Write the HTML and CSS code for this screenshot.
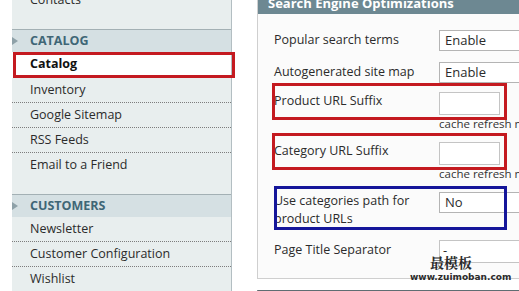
FILE: index.html
```html
<!DOCTYPE html>
<html lang="en">
<head>
    <meta charset="UTF-8">
    <title>Configuration - Catalog</title>
    <link rel="stylesheet" href="styles.css">
</head>
<body>
    <!-- Left configuration menu -->
    <div class="sidebar">
        <ul class="menu-section first">
            <li class="menu-item last">Contacts</li>
        </ul>

        <div class="menu-title">CATALOG</div>
        <ul class="menu-section">
            <li class="menu-item active">Catalog</li>
            <li class="menu-item">Inventory</li>
            <li class="menu-item">Google Sitemap</li>
            <li class="menu-item">RSS Feeds</li>
            <li class="menu-item last">Email to a Friend</li>
        </ul>

        <div class="menu-title">CUSTOMERS</div>
        <ul class="menu-section">
            <li class="menu-item">Newsletter</li>
            <li class="menu-item">Customer Configuration</li>
            <li class="menu-item last">Wishlist</li>
        </ul>
    </div>

    <!-- Settings panel -->
    <div class="content">
        <div class="fieldset">
            <div class="fieldset-title">Search Engine Optimizations</div>
            <div class="fieldset-body">
                <div class="row row-first">
                    <div class="field">
                        <div class="label">Popular search terms</div>
                        <div class="control select">Enable</div>
                    </div>
                </div>
                <div class="row row-second">
                    <div class="field">
                        <div class="label">Autogenerated site map</div>
                        <div class="control select">Enable</div>
                    </div>
                </div>
                <div class="row row-input">
                    <div class="field hl hl-red">
                        <div class="label">Product URL Suffix</div>
                        <div class="control text-input"></div>
                    </div>
                    <div class="note">cache refresh needed</div>
                </div>
                <div class="row row-input">
                    <div class="field hl hl-red">
                        <div class="label">Category URL Suffix</div>
                        <div class="control text-input"></div>
                    </div>
                    <div class="note">cache refresh needed</div>
                </div>
                <div class="row row-select">
                    <div class="field hl hl-blue">
                        <div class="label">Use categories path for product URLs</div>
                        <div class="control select">No</div>
                    </div>
                </div>
                <div class="row row-last">
                    <div class="field">
                        <div class="label">Page Title Separator</div>
                        <div class="control text-input">-</div>
                    </div>
                </div>
            </div>
        </div>
        <div class="fieldset next"></div>

        <!-- Watermark -->
        <div class="watermark">
            <div class="wm-cn">最模板</div>
            <div class="wm-url">www.zuimoban.com</div>
        </div>
    </div>
</body>
</html>
```

FILE: styles.css
```css
/* Reset */
* {
    box-sizing: border-box;
    margin: 0;
    padding: 0;
}

body {
    font-family: "Open Sans", "Noto Sans", Arial, sans-serif;
    font-size: 12.5px;
    color: #2b2b2b;
    background: #fff;
    display: flex;
    align-items: flex-start;
    height: 291px;
    overflow: hidden;
}

/* Sidebar menu */
.sidebar {
    width: 220px;
    margin-left: 12px;
    margin-top: -12px;
    background-color: #e8eeee;
    border-right: 1px solid #b3bec2;
    flex-shrink: 0;
}

.menu-section {
    list-style: none;
    padding-bottom: 16px;
}

.menu-section:last-child {
    padding-bottom: 0;
}

.menu-title {
    position: relative;
    height: 23px;
    line-height: 22px;
    padding-left: 18px;
    background-color: #d5e0e3;
    border-top: 1px solid #a3b0b4;
    color: #3f6676;
    font-weight: bold;
    font-size: 12.5px;
}

/* Small arrow in front of section titles */
.menu-title::before {
    content: "";
    position: absolute;
    left: 0;
    top: 7px;
    border-left: 6px solid #8ea1a8;
    border-top: 4px solid transparent;
    border-bottom: 4px solid transparent;
}

.menu-item {
    height: 25px;
    line-height: 24px;
    padding-left: 18px;
    border-bottom: 1px dotted #7d7d7d;
}

.menu-item.last {
    border-bottom: none;
}

.menu-item.active {
    position: relative;
    height: 26px;
    background-color: #fff;
    font-weight: bold;
    color: #111;
    border-bottom: none;
}

/* Red highlight around the active menu item */
.menu-item.active::after {
    content: "";
    position: absolute;
    left: 1px;
    right: -4px;
    top: 0;
    bottom: 0;
    border: 3px solid #c41a20;
}

/* Right content */
.content {
    position: relative;
    margin-left: 25px;
    flex: 1;
    min-width: 0;
    overflow: hidden;
    height: 291px;
}

.fieldset {
    border: 1px solid #cfcfcf;
    border-top: none;
    background-color: #fbfbfb;
    margin-top: -8px;
    width: 300px;
}

.fieldset-title {
    height: 22px;
    line-height: 22px;
    padding-left: 10px;
    background-color: #6d8892;
    color: #fff;
    font-weight: bold;
    font-size: 13px;
}

.fieldset-body {
    padding: 16px 0 15px 16px;
}

.row {
    margin-bottom: 11px;
}

.row-second {
    margin-bottom: 9px;
}

.row-input {
    margin-bottom: 11px;
}

.row-select {
    margin-bottom: 12px;
}

.row-last {
    margin-bottom: 0;
}

.field {
    display: flex;
    align-items: flex-start;
}

.label {
    width: 165px;
    line-height: 18px;
    padding-right: 12px;
    flex-shrink: 0;
}

.row-first .label,
.row-second .label,
.row-last .label {
    padding-top: 1px;
}

.control {
    width: 120px;
    background-color: #fff;
    border: 1px solid #b4b4b4;
    padding-left: 5px;
    font-size: 13px;
}

.select {
    height: 21px;
    line-height: 19px;
}

.text-input {
    width: 61px;
    height: 23px;
    line-height: 19px;
    border-color: #c4c4c4;
}

.row-last .text-input {
    width: 120px;
    padding-left: 3px;
}

.note {
    margin-left: 165px;
    margin-top: 2px;
    font-size: 11.5px;
    line-height: 14px;
    color: #333;
    white-space: nowrap;
}

/* Highlight frames drawn on top of fields */
.hl {
    position: relative;
}

.hl::after {
    content: "";
    position: absolute;
    pointer-events: none;
}

.hl-red::after {
    left: -2px;
    width: 229px;
    top: -9px;
    bottom: -5px;
    border: 3px solid #c41a20;
}

.hl-blue::after {
    left: 0;
    width: 227px;
    top: -6px;
    bottom: -2px;
    border: 3px solid #15169a;
}

.fieldset.next {
    margin-top: 11px;
    height: 10px;
    border-top: 2px solid #5f6d72;
    background-color: #fbfbfb;
}

.watermark {
    position: absolute;
    left: 153px;
    top: 254px;
    width: 100px;
    text-align: center;
    color: #2a2a2a;
}

.wm-cn {
    font-family: "Noto Serif CJK SC", "Noto Sans CJK SC", serif;
    font-weight: bold;
    font-size: 14px;
    line-height: 17px;
    padding-right: 18px;
}

.wm-url {
    font-family: "DejaVu Sans", sans-serif;
    font-weight: bold;
    font-size: 9px;
    line-height: 12px;
}
```
